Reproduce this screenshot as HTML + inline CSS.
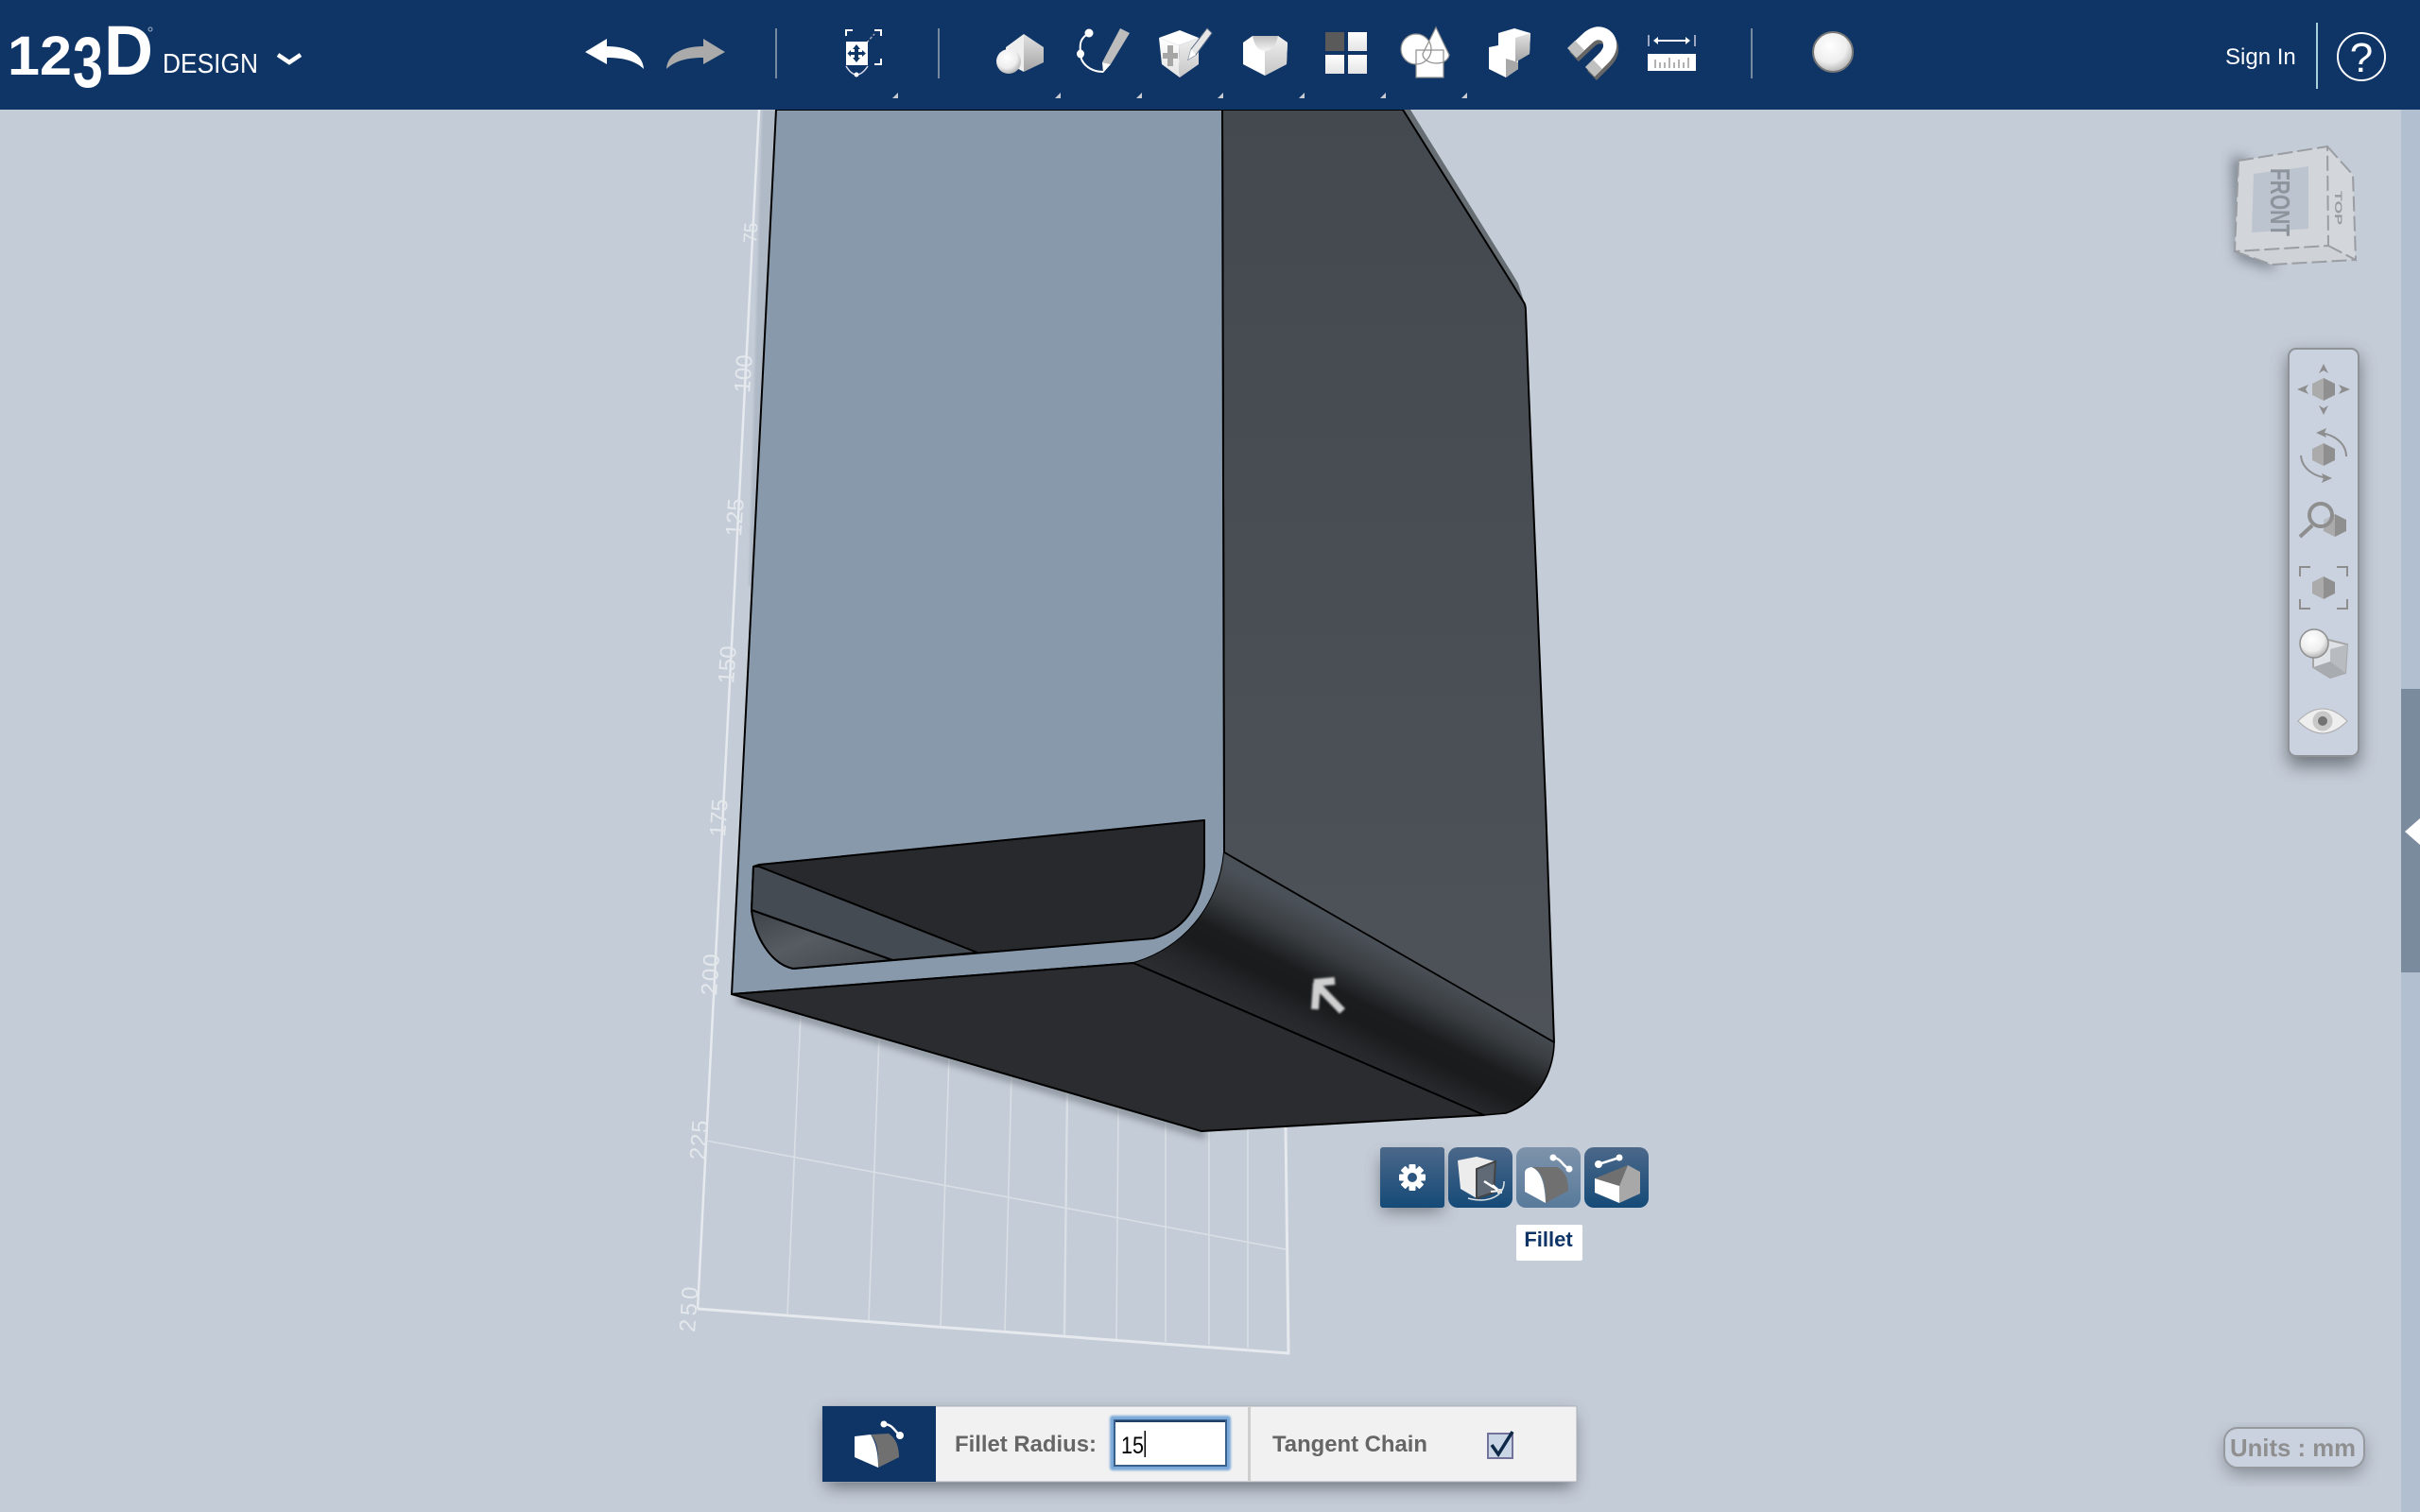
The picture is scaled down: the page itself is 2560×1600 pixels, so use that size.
<!DOCTYPE html>
<html>
<head>
<meta charset="utf-8">
<title>123D Design</title>
<style>
html,body{margin:0;padding:0;width:2560px;height:1600px;overflow:hidden;background:#c4ccd7}
svg{position:absolute;left:0;top:0;display:block}
text{font-family:"Liberation Sans",sans-serif}
</style>
</head>
<body>
<svg width="2560" height="1600" viewBox="0 0 2560 1600" xmlns="http://www.w3.org/2000/svg">
<defs>
<linearGradient id="fil" gradientUnits="userSpaceOnUse" x1="1468" y1="1002" x2="1410" y2="1118">
<stop offset="0" stop-color="#4b5158"/><stop offset=".25" stop-color="#3a3e42"/><stop offset=".5" stop-color="#1a1c1d"/><stop offset=".66" stop-color="#191b1c"/><stop offset=".85" stop-color="#26272a"/><stop offset="1" stop-color="#2b2c2f"/>
</linearGradient>
<linearGradient id="rf" x1="0" y1="0" x2="0" y2="1"><stop offset="0" stop-color="#43494f"/><stop offset="1" stop-color="#4e5359"/></linearGradient>
<linearGradient id="il" x1="0" y1="0" x2="1" y2="1"><stop offset="0" stop-color="#3c4247"/><stop offset=".45" stop-color="#565c62"/><stop offset="1" stop-color="#3f454a"/></linearGradient>
<linearGradient id="w" x1="0" y1="0" x2="0" y2="1"><stop offset="0" stop-color="#fff"/><stop offset="1" stop-color="#e4e4e4"/></linearGradient>
<linearGradient id="g" x1="0" y1="0" x2="0" y2="1"><stop offset="0" stop-color="#e2e2e2"/><stop offset="1" stop-color="#a4a4a4"/></linearGradient>
<linearGradient id="g2" x1="0" y1="0" x2="0" y2="1"><stop offset="0" stop-color="#f0f0f0"/><stop offset="1" stop-color="#c6c6c6"/></linearGradient>
<linearGradient id="sc" x1="0" y1="0" x2="0" y2="1"><stop offset="0" stop-color="#bdbdbd"/><stop offset="1" stop-color="#f4f4f4"/></linearGradient>
<linearGradient id="btn" x1="0" y1="0" x2="0" y2="1"><stop offset="0" stop-color="#4c6889"/><stop offset="1" stop-color="#154a78"/></linearGradient>
<linearGradient id="btn2" x1="0" y1="0" x2="0" y2="1"><stop offset="0" stop-color="#7e93ab"/><stop offset="1" stop-color="#587a9b"/></linearGradient>
<radialGradient id="ball" cx=".42" cy=".35" r=".7"><stop offset="0" stop-color="#fff"/><stop offset=".6" stop-color="#eee"/><stop offset="1" stop-color="#aaa"/></radialGradient>
<filter id="b4" x="-50%" y="-50%" width="200%" height="200%"><feGaussianBlur stdDeviation="4"/></filter>
<filter id="b7" x="-60%" y="-60%" width="220%" height="220%"><feGaussianBlur stdDeviation="7"/></filter>
<filter id="b8" x="-30%" y="-30%" width="160%" height="160%"><feGaussianBlur stdDeviation="9"/></filter>
<filter id="b1" x="-30%" y="-30%" width="160%" height="160%"><feGaussianBlur stdDeviation="1"/></filter>
<g id="hex"><polygon points="0,-12 -12,-6 -12,6 0,12" fill="#ababab"/><polygon points="0,-12 12,-6 12,6 0,12" fill="#8f8f8f"/></g>
</defs>

<!-- background -->
<rect width="2560" height="1600" fill="#c4ccd7"/>
<rect x="2540" y="116" width="20" height="1484" fill="#b1bfd0"/>
<rect x="2540" y="729" width="20" height="300" fill="#7b8b9e"/>
<polygon points="2560,866 2544,880 2560,894" fill="#fff"/>

<!-- grid -->
<g stroke="#e6eaee" fill="none">
<path d="M803 116 L738 1385" stroke-width="2.5"/>
<path d="M738 1385 L1363 1432 L1360 1193" stroke-width="3"/>
<path d="M747 1207 L1360 1322" stroke-width="1.6" stroke="#d9dfe5"/>
<g stroke-width="1.6" stroke="#d9dfe5">
<path d="M847 1073 L833 1390"/><path d="M930 1097 L919 1397"/><path d="M1004 1117 L995 1403"/><path d="M1070 1138 L1063 1408"/><path d="M1129 1153 L1126 1413" stroke-width="2.4"/><path d="M1183 1172 L1181 1417"/><path d="M1233 1188 L1233 1420"/><path d="M1279 1197 L1279 1423"/><path d="M1320 1193 L1320 1426"/>
</g>
</g>
<g fill="#e4e8ec" font-size="24">
<text transform="translate(800,258) rotate(-86)" font-size="20">75</text>
<text transform="translate(793,416) rotate(-86)" textLength="40">100</text>
<text transform="translate(784,568) rotate(-86)" textLength="40">125</text>
<text transform="translate(776,724) rotate(-86)" textLength="40">150</text>
<text transform="translate(767,886) rotate(-86)" textLength="40">175</text>
<text transform="translate(758,1054) rotate(-86)" textLength="44">200</text>
<text transform="translate(746,1228) rotate(-86)" textLength="42">225</text>
<text transform="translate(735,1410) rotate(-86)" textLength="48">250</text>
</g>

<!-- model shadow -->
<path d="M780 1056 L1275 1201" stroke="#707780" stroke-width="8" fill="none" filter="url(#b4)" opacity=".75"/>
<polygon points="806,116 821,116 798,620 792,620" fill="#a3aebb" opacity=".6" filter="url(#b1)"/>

<!-- right back sliver -->
<polygon points="1484,116 1492,116 1600,290 1606,300 1614,325" fill="#676e74"/>
<!-- right face -->
<path d="M1293 116 H1484 L1612 320 Q1614 323 1614 330 L1617 410 L1635 850 L1644 1103 L1295 902 Z" fill="url(#rf)" stroke="#000" stroke-width="2" stroke-linejoin="round"/>
<!-- light face -->
<path d="M821 116 H1293 L1295 902 C1290 960 1250 1005 1199 1019 L774 1052 Z" fill="#8899ab" stroke="#000" stroke-width="2" stroke-linejoin="round"/>
<!-- inner -->
<path d="M797 917 L803 915 L1274 868 L1274 917 C1272 960 1250 985 1220 993 L839 1025 C815 1020 798 990 795 963 Z" fill="#28292c" stroke="#000" stroke-width="2" stroke-linejoin="round"/>
<path d="M797 917 L803 917 L1034 1008 L944 1016 L795 963 Z" fill="#454b52" stroke="#000" stroke-width="2" stroke-linejoin="round"/>
<path d="M795 963 L944 1016 L839 1025 C815 1020 798 990 795 963 Z" fill="url(#il)" stroke="#000" stroke-width="2" stroke-linejoin="round"/>
<!-- fillet -->
<path d="M1295 902 L1644 1103 C1644 1127 1632 1165 1593 1178 L1570 1180 L1199 1019 C1250 1005 1290 960 1295 902 Z" fill="url(#fil)"/>
<path d="M1295 902 L1644 1103 C1644 1127 1632 1165 1593 1178 L1570 1180" fill="none" stroke="#000" stroke-width="1.6"/>
<!-- bottom -->
<path d="M774 1052 L1199 1019 L1570 1180 L1271 1197 Z" fill="#2b2c2f" stroke="#000" stroke-width="2" stroke-linejoin="round"/>
<!-- cursor -->
<path d="M1390 1040 L1412 1038 M1393 1040 L1391 1068 M1393 1042 L1420 1070" stroke="#cfcfcf" stroke-width="8" fill="none" filter="url(#b1)"/>

<!-- top bar -->
<rect width="2560" height="116" fill="#0e3566"/>
<!-- logo -->
<g fill="#fff">
<text x="8" y="79" font-size="58" font-weight="bold" textLength="68" lengthAdjust="spacingAndGlyphs">12</text>
<text x="77" y="92" font-size="76" font-weight="bold" textLength="32" lengthAdjust="spacingAndGlyphs">3</text>
<text x="110" y="79" font-size="74" font-weight="bold" textLength="52" lengthAdjust="spacingAndGlyphs">D</text>
<text x="172" y="77" font-size="29" textLength="101" lengthAdjust="spacingAndGlyphs">DESIGN</text>
</g>
<circle cx="159" cy="31" r="2" fill="none" stroke="#9fb0c5" stroke-width="1"/>
<path d="M294 58 L306 66 L318 58" fill="none" stroke="#fff" stroke-width="4.5"/>
<!-- undo/redo -->
<path d="M619 55 L642 41 V49 C662 49 680 56 681 73 C672 64 658 61 642 61 V68 Z" fill="#fff"/>
<path d="M767 55 L744 41 V49 C724 49 706 56 705 73 C714 64 728 61 744 61 V68 Z" fill="#aaa"/>
<!-- separators -->
<g stroke="#76899f" stroke-width="2"><path d="M821 30 V83"/><path d="M993 30 V83"/><path d="M1853 30 V83"/></g>
<!-- select icon -->
<g>
<path d="M895 38 V32 H902 M925 32 H932 V38 M932 62 V68 H925" fill="none" stroke="#fff" stroke-width="2"/>
<path d="M917 45 L925 36" stroke="#aab" stroke-width="1.5" stroke-dasharray="3 2"/>
<rect x="895" y="44" width="23" height="25" fill="#fff"/>
<path d="M906 47 L910 52 H908 V55 H912 V53 L916 56.500 L912 60 V58 H908 V61 H910 L906 66 L902 61 H904 V58 H900 V60 L896.500 56.500 L900 53 V55 H904 V52 H902 Z" fill="#0e3566"/>
<path d="M895 70 Q906 88 918 70" fill="none" stroke="#dde" stroke-width="1.5"/>
<circle cx="906" cy="79" r="2.500" fill="#fff"/>
</g>
<!-- small triangles -->
<g fill="#c8ccd2">
<polygon points="950,98 950,104 944,104"/><polygon points="1122,98 1122,104 1116,104"/><polygon points="1208,98 1208,104 1202,104"/><polygon points="1294,98 1294,104 1288,104"/><polygon points="1380,98 1380,104 1374,104"/><polygon points="1466,98 1466,104 1460,104"/><polygon points="1552,98 1552,104 1546,104"/>
</g>
<!-- 1 primitives -->
<polygon points="1083,36 1064,50 1064,66 1083,76" fill="#eee"/>
<polygon points="1083,36 1104,50 1104,66 1083,76" fill="url(#g)"/>
<ellipse cx="1067" cy="65" rx="13" ry="13" fill="url(#ball)"/>
<!-- 2 sketch -->
<path d="M1152 35 C1140 42 1143 50 1143 57 C1143 66 1152 76 1167 76" fill="none" stroke="#fff" stroke-width="2"/>
<ellipse cx="1152" cy="35" rx="4.500" ry="4.500" fill="#fff"/><ellipse cx="1143" cy="57" rx="4" ry="4.500" fill="#fff"/>
<polygon points="1185,30 1195,35 1175,68 1166,66" fill="#bdbdbd"/>
<polygon points="1166,66 1175,68 1167,77" fill="#fff"/>
<!-- 3 construct -->
<polygon points="1248,32 1226,40 1247,48 1268,40" fill="#fff"/>
<polygon points="1226,40 1247,48 1248,82 1229,68" fill="url(#w)"/>
<polygon points="1247,48 1268,40 1268,68 1248,82" fill="url(#g2)"/>
<path d="M1238 48 V70 M1230 59 H1246" stroke="#a6a6a6" stroke-width="6" fill="none"/>
<polygon points="1277,30 1282,35 1265,58 1257,63 1260,52" fill="#e6e6e6" stroke="#5d6f88" stroke-width="1"/>
<polygon points="1257,63 1260,52 1265,58" fill="#fff"/>
<!-- 4 modify -->
<polygon points="1325,38 1352,38 1362,45 1361,68 1338,80 1315,68 1315,45" fill="#fff"/>
<polygon points="1338,53 1352,38 1362,45 1361,68 1338,80" fill="url(#g2)"/>
<path d="M1325 38 C1327 48 1331 54 1338 54 C1345 54 1350 48 1352 38 Z" fill="url(#sc)"/>
<!-- 5 pattern -->
<rect x="1402" y="34" width="20" height="20" fill="#5a5a5a"/>
<rect x="1426" y="34" width="20" height="20" fill="url(#w)"/>
<rect x="1402" y="58" width="20" height="20" fill="url(#w)"/>
<rect x="1426" y="58" width="20" height="20" fill="url(#w)"/>
<!-- 6 group -->
<g fill="#fff">
<circle cx="1498" cy="52" r="16"/>
<path d="M1519 29 L1533 58 C1532 64 1526 67 1520 67 C1512 67 1505 63 1505 57 Z"/>
<rect x="1498" y="53" width="29" height="29"/>
<g fill="none" stroke="#8e8e8e" stroke-width="1.200">
<circle cx="1498" cy="52" r="16"/>
<path d="M1519 29 L1533 58 C1532 64 1526 67 1520 67 C1512 67 1505 63 1505 57 Z"/>
<rect x="1498" y="53" width="29" height="29"/>
</g>
</g>
<!-- 7 combine -->
<polygon points="1575,50 1585,48 1585,35 1602,30 1619,35 1618,57 1606,64 1606,73 1593,82 1575,73" fill="#fff"/>
<polygon points="1603,40 1619,35 1618,57 1603,66" fill="url(#g)"/>
<polygon points="1593,62 1606,66 1606,73 1593,82" fill="#a8a8a8"/>
<!-- 8 magnet -->
<path d="M1663 56 L1680 40 C1690 31 1702 36 1703 46 C1704 53 1700 58 1696 62 L1682 76" fill="none" stroke="#666" stroke-width="14" transform="translate(2,4)"/>
<path d="M1663 56 L1680 40 C1690 31 1702 36 1703 46 C1704 53 1700 58 1696 62 L1682 76" fill="none" stroke="#fff" stroke-width="14"/>
<path d="M1663 56 L1671 48 M1682 76 L1690 68" stroke="#c0c0c0" stroke-width="14" fill="none"/>
<!-- 9 ruler -->
<path d="M1744 37 V49 M1793 37 V49" stroke="#ccd" stroke-width="1.500"/>
<path d="M1749 43 L1754 39 V42 H1783 V39 L1788 43 L1783 47 V44 H1754 V47 Z" fill="#fff"/>
<rect x="1743" y="57" width="51" height="18" fill="#fff"/>
<path d="M1751 72 V63 M1756 72 V66 M1761 72 V66 M1766 72 V61 M1771 72 V66 M1776 72 V63 M1781 72 V66 M1786 72 V61" stroke="#999" stroke-width="1.500"/>
<!-- material -->
<circle cx="1939" cy="55" r="21" fill="url(#ball)" stroke="#777" stroke-width="2"/>
<!-- sign in -->
<text x="2354" y="68" font-size="24" fill="#fff">Sign In</text>
<rect x="2450" y="24" width="2" height="70" fill="#a8d0dc"/>
<circle cx="2498" cy="60" r="25" fill="none" stroke="#fff" stroke-width="2"/>
<text x="2498" y="76" font-size="44" fill="#fff" text-anchor="middle">?</text>

<!-- view cube -->
<path d="M2362 165 L2366 272 L2405 285 L2404 272 L2378 262 L2378 170 Z" fill="#5f6771" filter="url(#b7)" opacity=".85"/>
<polygon points="2368,170 2462,155 2463,260 2364,266" fill="#d2d5da"/>
<polygon points="2462,155 2489,185 2492,275 2463,260" fill="#d3d6db"/>
<polygon points="2364,266 2463,260 2492,275 2403,280" fill="#cfd3d8"/>
<polygon points="2384,184 2442,176 2442,242 2382,246" fill="#bcc4cf"/>
<g fill="none" stroke="#9a9da2" stroke-width="2" stroke-dasharray="16 5">
<path d="M2368 170 L2462 155 L2463 260 L2364 266 Z"/><path d="M2462 155 L2489 185 L2492 275 L2463 260"/><path d="M2364 266 L2403 280 L2492 275"/>
</g>
<text transform="translate(2402,178) rotate(90)" font-size="29" font-weight="bold" fill="#8e949c" textLength="72" lengthAdjust="spacingAndGlyphs">FRONT</text>
<text transform="translate(2470,202) rotate(90)" font-size="11" font-weight="bold" fill="#9a9da2" textLength="36" lengthAdjust="spacingAndGlyphs">TOP</text>

<!-- nav panel -->
<rect x="2420" y="375" width="76" height="436" rx="9" fill="#4f545a" filter="url(#b8)" opacity=".7"/>
<rect x="2421" y="369" width="74" height="431" rx="8" fill="#cad2e0" stroke="#8f9297" stroke-width="2"/>
<use href="#hex" x="2458" y="412"/>
<g fill="#8e8e8e">
<path d="M2458 385 L2463 395 L2458 392 L2453 395 Z"/><path d="M2458 439 L2463 429 L2458 432 L2453 429 Z"/>
<path d="M2430 412 L2442 407 L2439 412 L2442 417 Z"/><path d="M2486 412 L2474 407 L2477 412 L2474 417 Z"/>
</g>
<use href="#hex" x="2458" y="481"/>
<path d="M2482 483 C2482 470 2470 459 2452 458 M2434 482 C2435 495 2447 505 2465 506" fill="none" stroke="#8e8e8e" stroke-width="2"/>
<path d="M2450 458 L2461 453 L2459 458 L2461 463 Z M2467 506 L2456 501 L2458 506 L2456 511 Z" fill="#8e8e8e"/>
<use href="#hex" x="2470" y="556"/>
<circle cx="2455" cy="545" r="12" fill="#cad2e0" fill-opacity=".5" stroke="#8e8e8e" stroke-width="4"/>
<path d="M2433 568 L2446 556" stroke="#8e8e8e" stroke-width="4"/>
<use href="#hex" x="2458" y="622"/>
<path d="M2444 600 H2433 V610 M2472 600 H2483 V610 M2444 644 H2433 V634 M2472 644 H2483 V634" fill="none" stroke="#8e8e8e" stroke-width="2"/>
<polygon points="2463,677 2483,682 2481,712 2465,717 2447,706 2447,685" fill="#dfe2e6" stroke="#a5a5a5" stroke-width="2"/>
<polygon points="2465,687 2483,682 2481,712 2465,717" fill="#b8bcc0"/>
<polygon points="2447,706 2465,700 2481,712 2465,717" fill="#a8acb0"/>
<circle cx="2448" cy="681" r="15" fill="url(#ball)" stroke="#8e8e8e" stroke-width="1.500"/>
<path d="M2431 763 Q2457 737 2483 763 Q2457 789 2431 763 Z" fill="#eee" stroke="#aaa" stroke-width="1"/>
<circle cx="2457" cy="763" r="10.500" fill="#c8c8c8"/><circle cx="2457" cy="763" r="5" fill="#737373"/>

<!-- mini toolbar -->
<rect x="1462" y="1225" width="64" height="56" fill="#545a62" filter="url(#b8)" opacity=".75"/>
<rect x="1460" y="1214" width="68" height="64" rx="3" fill="url(#btn)"/>
<rect x="1532" y="1214" width="68" height="64" rx="10" fill="url(#btn)"/>
<rect x="1604" y="1214" width="68" height="64" rx="10" fill="url(#btn2)"/>
<rect x="1676" y="1214" width="68" height="64" rx="10" fill="url(#btn)"/>
<!-- gear -->
<g transform="translate(1494,1246)">
<g fill="#fff"><rect x="-3.500" y="-14" width="7" height="28" rx="1"/><rect x="-3.500" y="-14" width="7" height="28" rx="1" transform="rotate(45)"/><rect x="-3.500" y="-14" width="7" height="28" rx="1" transform="rotate(90)"/><rect x="-3.500" y="-14" width="7" height="28" rx="1" transform="rotate(135)"/></g>
<circle r="10" fill="#fff"/><circle r="5" fill="#2c5680"/>
</g>
<!-- press-pull -->
<polygon points="1542,1228 1562,1224 1582,1229 1562,1237 1562,1268 1545,1258" fill="#ececec"/>
<polygon points="1562,1237 1582,1229 1580,1262 1562,1268" fill="#5f6a76" stroke="#444" stroke-width="2"/>
<path d="M1553 1268 C1575 1274 1592 1265 1591 1250" fill="none" stroke="#dfe4ea" stroke-width="1.500"/>
<path d="M1570 1250 L1584 1259" stroke="#fff" stroke-width="2.500"/><path d="M1579 1254 L1586 1260 L1577 1261" fill="none" stroke="#fff" stroke-width="2"/>
<rect x="1584" y="1258" width="5" height="5" fill="#ddd"/>
<!-- fillet btn -->
<path d="M1620 1235 L1647 1235 Q1659 1240 1659 1260 L1635 1273 Q1636 1240 1620 1235 Z" fill="#707070"/>
<path d="M1613 1240 Q1614 1236 1620 1235 Q1634 1240 1635 1273 L1613 1261 Z" fill="#fff"/>
<path d="M1643 1225 C1652 1226 1652 1233 1660 1237" fill="none" stroke="#fff" stroke-width="2.500"/>
<circle cx="1643" cy="1225" r="3.500" fill="#fff"/><circle cx="1660" cy="1237" r="3.500" fill="#fff"/>
<!-- chamfer btn -->
<polygon points="1687,1247 1722,1233 1713,1255" fill="#707070"/>
<polygon points="1687,1247 1713,1255 1713,1273 1687,1262" fill="#fff"/>
<polygon points="1713,1255 1722,1233 1735,1240 1735,1263 1713,1273" fill="#a8a8a8"/>
<path d="M1691 1232 L1713 1225" stroke="#fff" stroke-width="2.500"/>
<circle cx="1691" cy="1232" r="4" fill="#fff"/><circle cx="1713" cy="1225" r="3.500" fill="#fff"/>
<!-- tooltip -->
<rect x="1604" y="1296" width="70" height="38" rx="2" fill="#fff"/>
<text x="1638" y="1319" font-size="22" font-weight="bold" fill="#0e3566" text-anchor="middle">Fillet</text>

<!-- bottom panel -->
<rect x="874" y="1497" width="790" height="76" fill="#3f454d" filter="url(#b8)" opacity=".7"/>
<rect x="870" y="1488" width="798" height="80" fill="#f1f1f1" stroke="#a9b0b8" stroke-width="1"/>
<rect x="870" y="1488" width="120" height="80" fill="#0e3566"/>
<path d="M921 1518 L940 1517 Q951 1524 951 1542 L929 1553 Q930 1526 921 1518 Z" fill="#707070"/>
<path d="M904 1520 L921 1518 Q929 1530 929 1553 L904 1542 Z" fill="#fff"/>
<path d="M935 1507 C944 1507 946 1514 952 1519" fill="none" stroke="#fff" stroke-width="2.500"/>
<circle cx="935" cy="1507" r="3.500" fill="#fff"/><circle cx="952" cy="1519" r="4" fill="#fff"/>
<text x="1010" y="1536" font-size="24.500" font-weight="bold" fill="#666" textLength="150" lengthAdjust="spacingAndGlyphs">Fillet Radius:</text>
<rect x="1174" y="1498" width="128" height="58" rx="3" fill="#7aa8d8" filter="url(#b1)"/>
<rect x="1179" y="1503" width="118" height="48" fill="#fff" stroke="#37618c" stroke-width="2"/>
<path d="M1180 1504 H1296" stroke="#1f3f63" stroke-width="2"/>
<text x="1186" y="1538" font-size="25" fill="#000" textLength="24" lengthAdjust="spacingAndGlyphs">15</text>
<rect x="1210.500" y="1514" width="1.500" height="28" fill="#000"/>
<rect x="1320" y="1488" width="3" height="80" fill="#cecece"/>
<text x="1346" y="1536" font-size="24" font-weight="bold" fill="#666" textLength="164" lengthAdjust="spacingAndGlyphs">Tangent Chain</text>
<rect x="1574" y="1517" width="26" height="26" fill="#c9d6e6" stroke="#74739b" stroke-width="2"/>
<path d="M1578 1529 L1585 1539 L1600 1515" fill="none" stroke="#0e2a48" stroke-width="3.500"/>

<!-- units -->
<rect x="2354" y="1518" width="146" height="42" rx="14" fill="#5c6167" filter="url(#b8)" opacity=".6"/>
<rect x="2353" y="1511" width="148" height="42" rx="14" fill="#cad2e0" stroke="#96999e" stroke-width="2"/>
<text x="2359" y="1541" font-size="26" font-weight="bold" fill="#8f8f8f" textLength="133" lengthAdjust="spacingAndGlyphs">Units : mm</text>
</svg>
</body>
</html>
